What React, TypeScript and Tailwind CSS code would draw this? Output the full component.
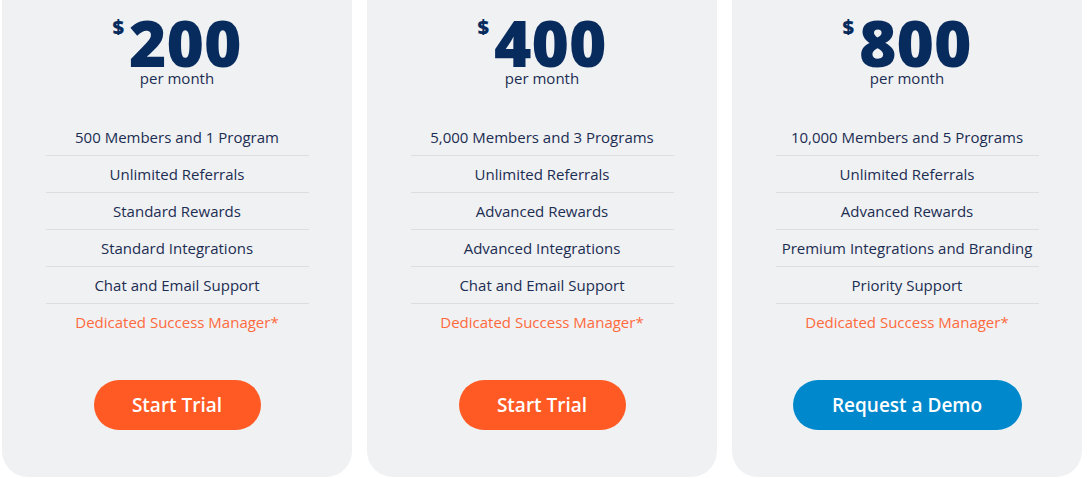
const plans = [
  {
    price: "200",
    features: [
      "500 Members and 1 Program",
      "Unlimited Referrals",
      "Standard Rewards",
      "Standard Integrations",
      "Chat and Email Support",
    ],
    cta: "Start Trial",
    ctaClass: "bg-[#ff5a24] w-[167px]",
  },
  {
    price: "400",
    features: [
      "5,000 Members and 3 Programs",
      "Unlimited Referrals",
      "Advanced Rewards",
      "Advanced Integrations",
      "Chat and Email Support",
    ],
    cta: "Start Trial",
    ctaClass: "bg-[#ff5a24] w-[167px]",
  },
  {
    price: "800",
    features: [
      "10,000 Members and 5 Programs",
      "Unlimited Referrals",
      "Advanced Rewards",
      "Premium Integrations and Branding",
      "Priority Support",
    ],
    cta: "Request a Demo",
    ctaClass: "bg-[#0088cc] w-[229px]",
  },
]

export default function App() {
  return (
    <div className="flex gap-[15px] px-[2px] bg-white font-['Open_Sans',sans-serif] h-[478px]">
      {plans.map((p) => (
        <div
          key={p.price}
          className="w-[350px] h-[477px] bg-[#f0f1f3] rounded-b-[26px] flex flex-col items-center"
        >
          {/* price */}
          <div className="flex items-start text-[#082b5e] mt-[17px]">
            <span className="text-[20px] font-extrabold leading-[20px] mr-[5px]">$</span>
            <span className="text-[64px] font-extrabold leading-[52px]">{p.price}</span>
          </div>
          <p className="text-[15px] leading-[18px] text-[#1b2d52]">per month</p>

          {/* features */}
          <ul className="w-[263px] mt-[32px] text-[15px] text-[#1b2d52]">
            {p.features.map((f) => (
              <li key={f} className="h-[37px] flex items-center justify-center border-b border-[#dcdee2]">
                {f}
              </li>
            ))}
            <li className="h-[37px] flex items-center justify-center text-[#ff6a3d]">
              Dedicated Success Manager*
            </li>
          </ul>

          <button
            className={`${p.ctaClass} mt-[39px] h-[50px] rounded-full text-white text-[19px] font-semibold`}
          >
            {p.cta}
          </button>
        </div>
      ))}
    </div>
  )
}
